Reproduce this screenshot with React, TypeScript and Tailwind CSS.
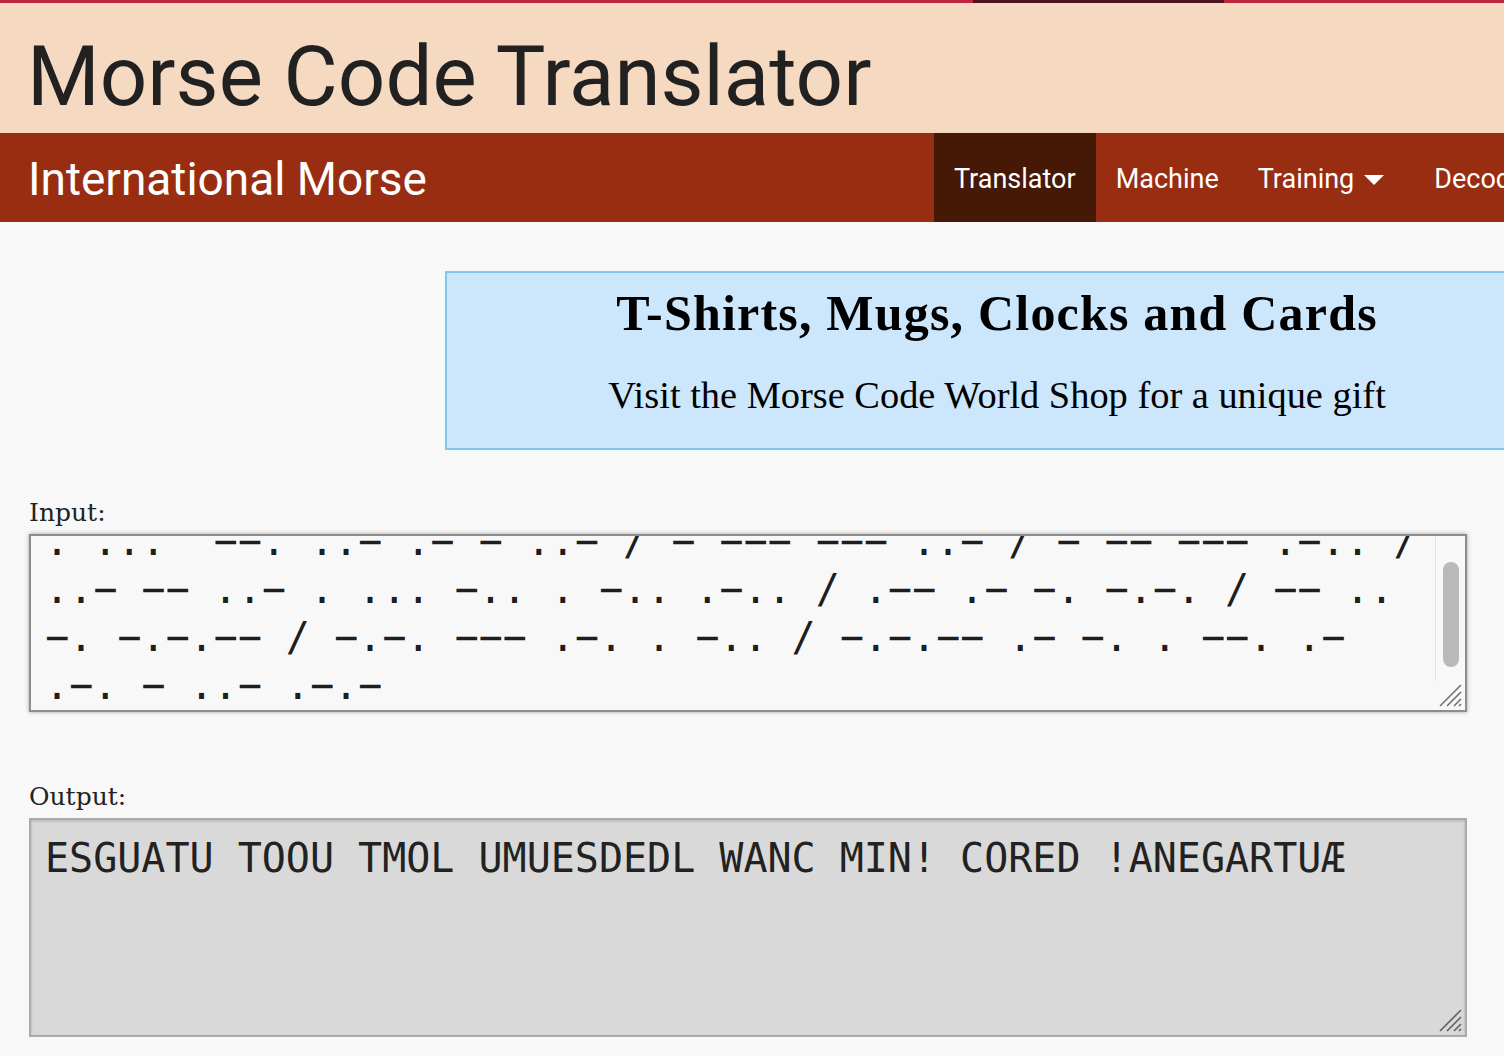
import React from "react";

const inputLines = [
  ". ...  −−. ..− .− − ..− / − −−− −−− ..− / − −− −−− .−.. /",
  "..− −− ..− . ... −.. . −.. .−.. / .−− .− −. −.−. / −− ..",
  "−. −.−.−− / −.−. −−− .−. . −.. / −.−.−− .− −. . −−. .−",
  ".−. − ..− .−.−",
];

function Grip({ color }: { color: string }) {
  return (
    <svg width="26" height="26" viewBox="0 0 26 26" className="absolute right-[2px] bottom-[2px]">
      <line x1="3" y1="24" x2="24" y2="3" stroke={color} strokeWidth="1.6" />
      <line x1="10" y1="24" x2="24" y2="10" stroke={color} strokeWidth="1.6" />
      <line x1="17" y1="24" x2="24" y2="17" stroke={color} strokeWidth="1.6" />
      <line x1="22" y1="24" x2="24" y2="22" stroke={color} strokeWidth="1.6" />
    </svg>
  );
}

export default function App() {
  return (
    <div className="w-[1504px] h-[1056px] overflow-hidden bg-[#f8f8f8]">
      {/* top stripe */}
      <div className="flex h-[3px]">
        <div className="w-[973px] bg-[#c0263e]" />
        <div className="w-[251px] bg-[#4c1420]" />
        <div className="flex-1 bg-[#c0263e]" />
      </div>

      {/* header */}
      <header className="h-[130px] bg-[#f5d9c1] pl-[27px] pt-[32px]">
        <h1 className="font-['Roboto',sans-serif] text-[83.4px] leading-none text-[#212121] whitespace-nowrap">
          Morse Code Translator
        </h1>
      </header>

      {/* nav */}
      <nav className="flex h-[89px] bg-[#992d12] pl-[28px] whitespace-nowrap font-['Roboto',sans-serif] text-white">
        <div className="flex w-[906px] flex-none items-center pt-[3px] text-[46px] leading-none">
          International Morse
        </div>
        <div className="flex flex-none items-stretch text-[27px] leading-none">
          <div className="flex items-center bg-[#461806] px-[20px] pt-[3px]">Translator</div>
          <div className="flex items-center px-[20px] pt-[3px]">Machine</div>
          <div className="flex items-center pl-[19px] pr-[30px] pt-[3px]">
            Training
            <span className="ml-[10px] mt-[1px] h-0 w-0 border-x-[10px] border-t-[10px] border-x-transparent border-t-white" />
          </div>
          <div className="flex items-center px-[20px] pt-[3px]">Decoder</div>
          <div className="flex items-center px-[20px] pt-[3px]">Learn</div>
        </div>
      </nav>

      {/* main */}
      <main className="pl-[29px]">
        <div className="ml-[416px] mt-[49px] w-[1104px] border-2 border-[#80c6f4] bg-[#cce6fb] pt-[15px] pb-[34px] text-center text-black font-['Liberation_Serif',serif]">
          <h2 className="text-[50px] font-bold leading-none tracking-[1.2px]">T-Shirts, Mugs, Clocks and Cards</h2>
          <p className="mt-[38px] text-[38.4px] leading-none">Visit the Morse Code World Shop for a unique gift</p>
        </div>

        <label className="mt-[50px] block text-[25px] leading-none text-[#222] font-['DejaVu_Serif',serif]">
          Input:
        </label>
        <div className="relative mt-[9px] h-[178px] w-[1438px] overflow-hidden border-2 border-[#8d8d8d] bg-[#f8f8f8] shadow-[0_0_4px_rgba(0,0,0,0.35)]">
          <div className="-mt-[19px] pl-[14px] font-['DejaVu_Sans_Mono',monospace] text-[40px] leading-[48px] text-[#1e1e1e] whitespace-pre">
            {inputLines.map((l, i) => (
              <div key={i}>{l}</div>
            ))}
          </div>
          {/* scrollbar */}
          <div className="absolute right-0 top-0 h-[145px] w-[30px] border-l border-[#e2e2e2] bg-[#f8f8f8]">
            <div className="ml-[7px] mt-[26px] h-[105px] w-[16px] rounded-full bg-[#b9b9b9]" />
          </div>
          <Grip color="#6f6f6f" />
        </div>

        <label className="mt-[72px] block text-[25px] leading-none text-[#222] font-['DejaVu_Serif',serif]">
          Output:
        </label>
        <div className="relative mt-[9px] h-[219px] w-[1438px] overflow-hidden border-2 border-[#ababab] bg-[#d9d9d9] shadow-[inset_0_1px_3px_rgba(0,0,0,0.18)]">
          <div className="pl-[14px] pt-[14px] font-['DejaVu_Sans_Mono',monospace] text-[40px] leading-[48px] text-[#222] whitespace-pre">
            ESGUATU TOOU TMOL UMUESDEDL WANC MIN! CORED !ANEGARTUÆ
          </div>
          <Grip color="#5f5f5f" />
        </div>
      </main>
    </div>
  );
}
